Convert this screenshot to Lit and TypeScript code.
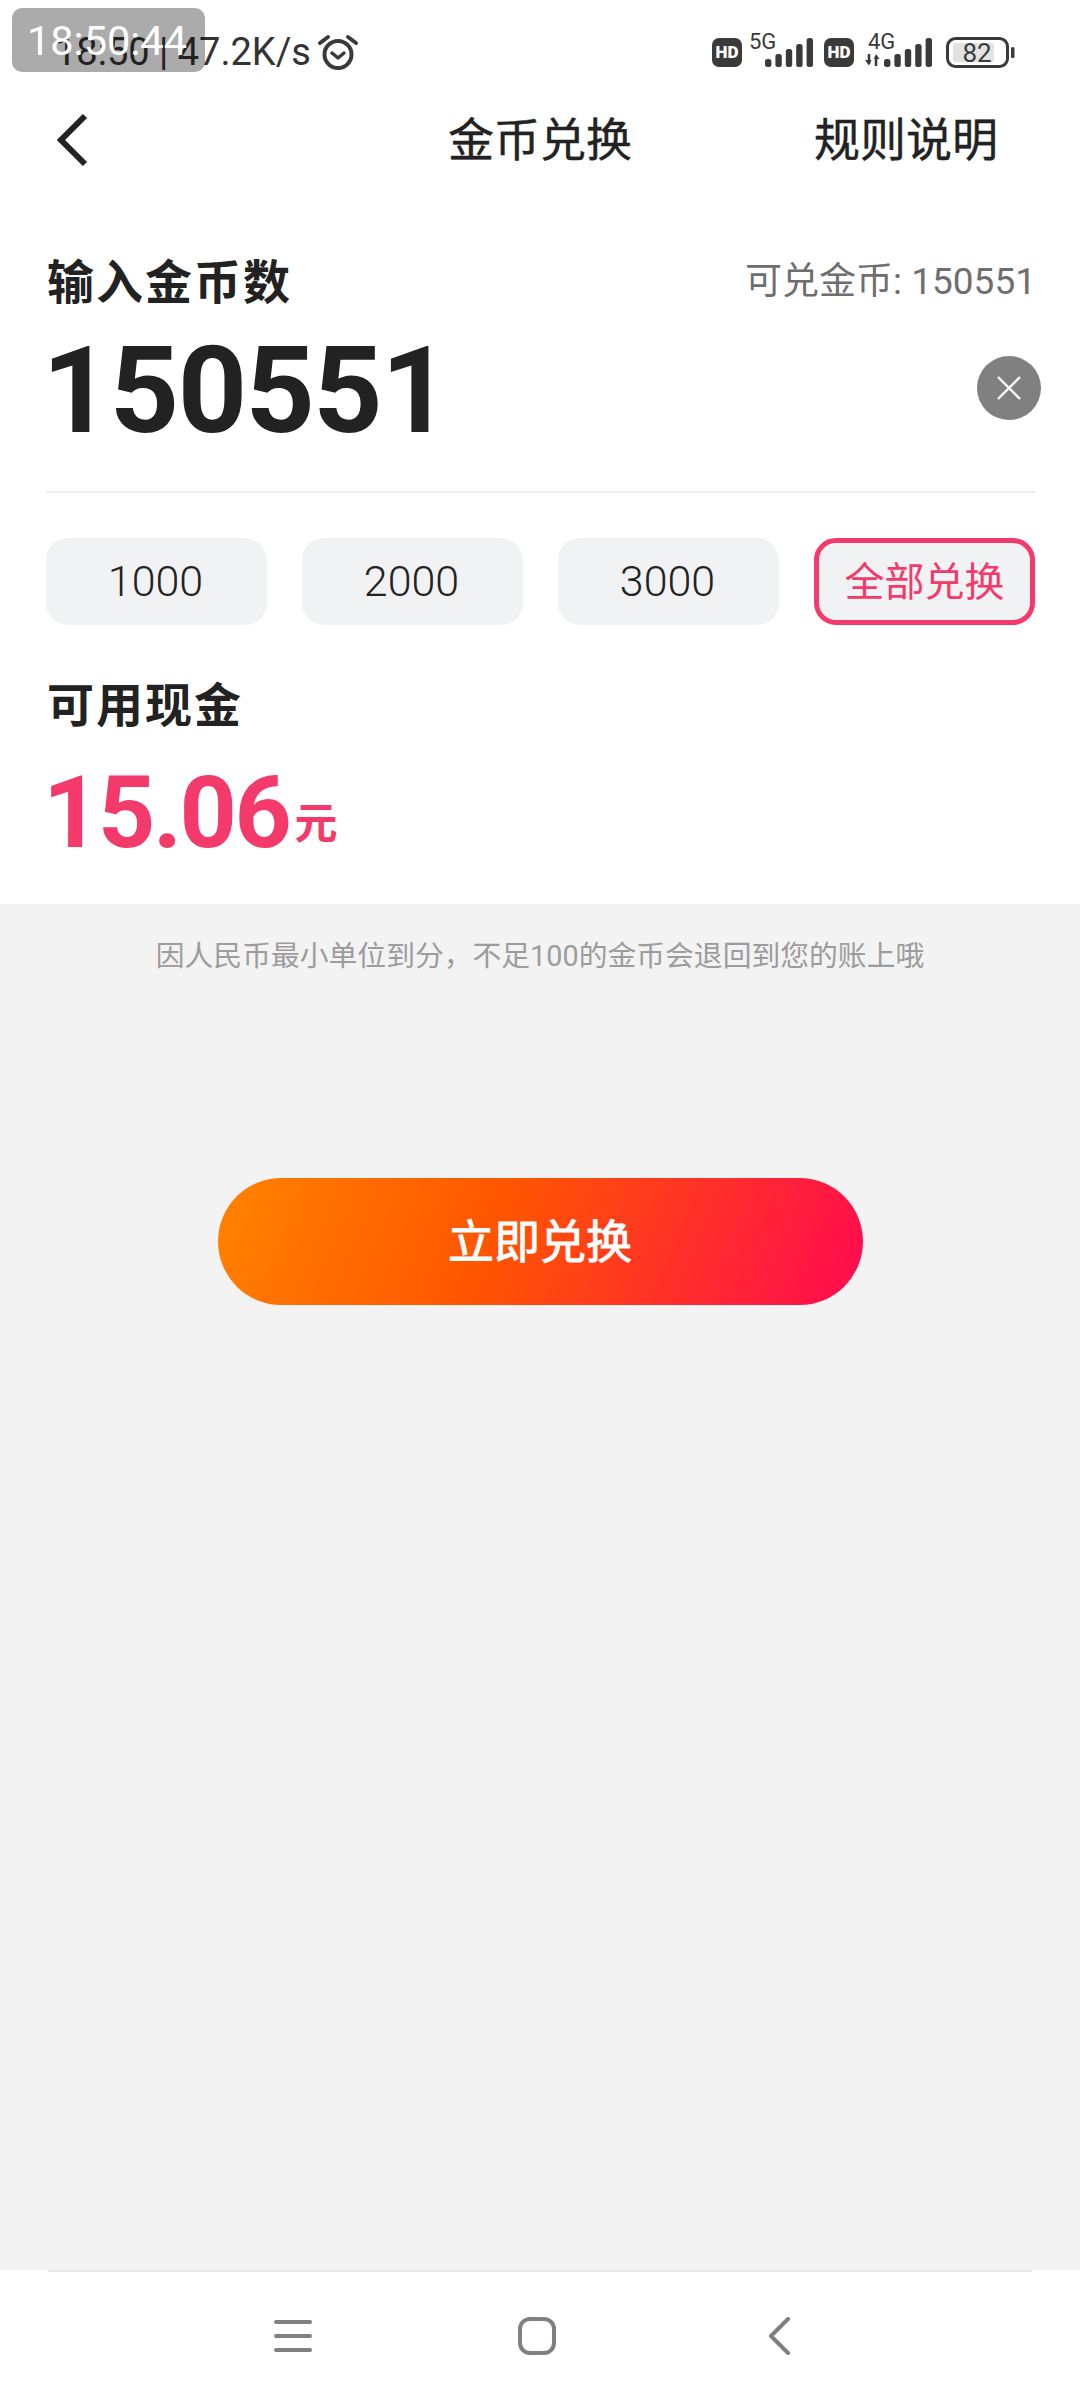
import { LitElement, html, css, svg } from "lit";
import { customElement } from "lit/decorators.js";

const bars = (x0: number) => [8, 13, 18, 23, 29].map((h, i) => svg`<rect x=${x0 + i * 10.4} y=${30 - h} width="6.4" height=${h} rx="2.5" fill="#3a3a3a"/>`);

@customElement("app-root")
export class AppRoot extends LitElement {
  static styles = css`
    :host { display: block; width: 1080px; height: 2400px; font-family: Roboto, "Noto Sans CJK SC", sans-serif; color: #222; background: #fff; }
    .page { height: 2400px; display: flex; flex-direction: column; }
    .status { position: relative; height: 84px; flex: none; display: flex; align-items: flex-start; justify-content: space-between; padding: 30px 64px 0 55px; box-sizing: border-box; }
    .status-left { display: flex; align-items: flex-start; gap: 6px; font-size: 38px; line-height: 44px; color: #333; white-space: pre; }
    .status-left svg { margin-top: 3px; }
    .status-right { display: flex; align-items: flex-start; }
    .status-right svg { display: block; }
    .batt { margin-top: 7px; }
    .stamp { position: absolute; left: 12px; top: 8px; width: 190px; height: 64px; padding-right: 3px; border-radius: 10px; background: rgba(0,0,0,.33); color: #fff; font-size: 41.5px; line-height: 66px; text-align: center; }
    .hd { width: 30px; height: 29px; border-radius: 7px; background: #3a3a3a; color: #fff; font-size: 17px; font-weight: 900; line-height: 29px; text-align: center; margin-top: 8px; }
    .nav { height: 112px; flex: none; display: flex; align-items: center; justify-content: space-between; padding: 0 82px 8px 54px; box-sizing: border-box; position: relative; }
    .back { display: block; width: 36px; height: 56px; margin-top: 8px; }
    .title { position: absolute; left: 0; right: 0; text-align: center; font-size: 46px; color: #222; -webkit-text-stroke: .4px #222; }
    .rules { font-size: 46px; color: #222; position: relative; -webkit-text-stroke: .4px #222; }
    .panel { padding: 0 45px 0 46px; height: 708px; box-sizing: border-box; flex: none; }
    .row1 { margin-top: 60px; display: flex; justify-content: space-between; align-items: center; height: 54px; }
    .label { font-size: 47px; font-weight: 700; letter-spacing: 2px; line-height: 54px; color: #222; margin-left: 1px; }
    .avail { font-size: 37px; line-height: 48px; color: #6e6e6e; margin: -2px -1px 0 0; }
    .row2 { display: flex; justify-content: space-between; align-items: center; height: 156px; margin-bottom: 25px; }
    .num { font-size: 121px; font-weight: 700; line-height: 156px; color: #222; letter-spacing: -1.6px; margin: 5px 0 0 -4px; }
    .clear { width: 64px; height: 64px; border-radius: 50%; background: #808080; display: flex; align-items: center; justify-content: center; margin-right: -6px; }
    .clear svg { display: block; }
    .divider { height: 2px; background: #eee; }
    .chips { margin-top: 45px; display: grid; grid-template-columns: repeat(4, 221px); justify-content: space-between; }
    .chip { height: 87px; border-radius: 22px; background: #f1f2f4; display: flex; align-items: center; justify-content: center; font-size: 43px; font-weight: 300; color: #222; box-sizing: border-box; padding: 0 2px 2px 0; }
    .chip.on { border: 5px solid #f43a6a; color: #f43a6a; font-size: 40px; font-weight: 400; padding: 0 0 5px 0; }
    .cash-label { margin-top: 54px; font-size: 47px; font-weight: 700; letter-spacing: 2px; line-height: 54px; color: #222; margin-left: 1px; }
    .cash { height: 120px; line-height: 120px; color: #f43a6a; font-weight: 700; margin: 20px 0 0 -3px; white-space: nowrap; }
    .cash b { font-size: 100px; font-weight: 700; letter-spacing: -2.4px; }
    .cash span { font-size: 43px; margin-left: 5px; vertical-align: 8px; }
    .grey { flex: 1; background: #f3f3f3; display: flex; flex-direction: column; align-items: center; }
    .hint { margin-top: 32px; height: 40px; line-height: 40px; font-size: 28.8px; color: #9c9c9c; }
    .cta { margin-top: 202px; width: 645px; height: 127px; border-radius: 64px; background: linear-gradient(112deg, #ff8300 0%, #ff5600 42%, #ff0f4c 96%); color: #fff; font-size: 46px; font-weight: 400; -webkit-text-stroke: 1px #fff; display: flex; align-items: center; justify-content: center; padding-bottom: 8px; box-sizing: border-box; }
    .bottom { height: 130px; flex: none; background: #fff; }
    .bottom .line { height: 2px; margin: 0 48px; background: #e8e8e8; }
    .keys { height: 128px; display: flex; align-items: center; gap: 206px; padding-left: 274px; }
    .keys svg { display: block; }
    .keys .k3 { margin-left: 5px; }
  `;

  render() {
    return html`<div class="page">
      <div class="status">
        <div class="status-left"><span>18:50 | 47.2K/s</span>
          <svg width="42" height="38" viewBox="0 0 42 38" fill="none" stroke="#3a3a3a">
            <circle cx="21" cy="21.5" r="13.5" stroke-width="4"/>
            <path d="M15 20l6 5 6-5" stroke-width="3.5" stroke-linecap="round" stroke-linejoin="round"/>
            <path d="M3 10l8-6M39 10l-8-6" stroke-width="4" stroke-linecap="round"/>
          </svg>
        </div>
        <div class="status-right">
          <div class="hd">HD</div>
          <svg width="82" height="42" viewBox="0 0 82 42"><text x="7" y="19" font-size="22" fill="#3a3a3a" font-family="Roboto">5G</text><g transform="translate(23,7)">${bars(0)}</g></svg>
          <div class="hd">HD</div>
          <svg width="92" height="42" viewBox="0 0 92 42"><text x="14" y="19" font-size="22" fill="#3a3a3a" font-family="Roboto">4G</text>
            <path d="M15 24v10M22 26v10" stroke="#3a3a3a" stroke-width="2.5" fill="none"/>
            <path d="M11 30h6.5L15 35.5zM20 29l2-5 3.5 5z" fill="#3a3a3a"/>
            <g transform="translate(30,7)">${bars(0)}</g></svg>
          <svg class="batt" width="70" height="32" viewBox="0 0 70 32">
            <rect x="1.5" y="1.5" width="60" height="28" rx="8" fill="none" stroke="#3a3a3a" stroke-width="3"/>
            <rect x="7" y="6" width="41" height="19" rx="2" fill="#e2e2e2"/>
            <text x="31" y="25" text-anchor="middle" font-size="26" fill="#3a3a3a" font-family="Roboto">82</text>
            <rect x="65" y="10" width="3.5" height="11" rx="1.5" fill="#3a3a3a"/>
          </svg>
        </div>
        <div class="stamp">18:50:44</div>
      </div>
      <div class="nav">
        <svg class="back" viewBox="0 0 36 56" fill="none"><path d="M31 4L7 28l24 24" stroke="#222" stroke-width="6"/></svg>
        <div class="title">金币兑换</div>
        <div class="rules">规则说明</div>
      </div>
      <div class="panel">
        <div class="row1"><div class="label">输入金币数</div><div class="avail">可兑金币: 150551</div></div>
        <div class="row2"><div class="num">150551</div>
          <div class="clear"><svg width="26" height="26" viewBox="0 0 26 26"><path d="M2 2l22 22M24 2L2 24" stroke="#fff" stroke-width="2.4"/></svg></div>
        </div>
        <div class="divider"></div>
        <div class="chips">
          <div class="chip">1000</div><div class="chip">2000</div><div class="chip">3000</div><div class="chip on">全部兑换</div>
        </div>
        <div class="cash-label">可用现金</div>
        <div class="cash"><b>15.06</b><span>元</span></div>
      </div>
      <div class="grey">
        <div class="hint">因人民币最小单位到分，不足100的金币会退回到您的账上哦</div>
        <div class="cta">立即兑换</div>
      </div>
      <div class="bottom">
        <div class="line"></div>
        <div class="keys">
          <svg width="38" height="36" viewBox="0 0 38 36"><path d="M2 4h34M2 18h34M2 32h34" stroke="#808080" stroke-width="4" stroke-linecap="round"/></svg>
          <svg width="38" height="38" viewBox="0 0 38 38"><rect x="2" y="2" width="34" height="34" rx="10" fill="none" stroke="#808080" stroke-width="4"/></svg>
          <svg class="k3" width="24" height="38" viewBox="0 0 24 38" fill="none"><path d="M21 2L4 19l17 17" stroke="#808080" stroke-width="4" stroke-linecap="round" stroke-linejoin="round"/></svg>
        </div>
      </div>
    </div>`;
  }
}
